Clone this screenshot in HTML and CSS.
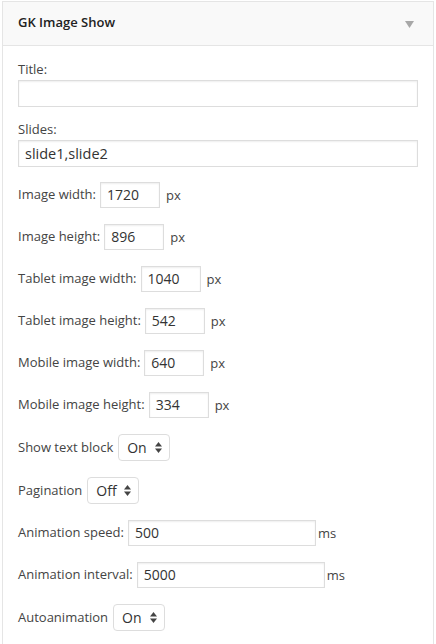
FILE: index.html
```html
<!DOCTYPE html>
<html>
<head>
<meta charset="utf-8">
<link rel="stylesheet" href="styles.css">
</head>
<body>
<div class="widget">
  <div class="widget-top">
    <h4 class="widget-title">GK Image Show</h4>
    <svg class="toggle" width="9" height="7" viewBox="0 0 9 7"><polygon points="0,0 9,0 4.5,7" fill="#a8a8a8"/></svg>
  </div>
  <div class="widget-inside">
    <div class="field block first">
      <label class="lbl">Title:</label>
      <div class="input wide"></div>
    </div>
    <div class="field block second">
      <label class="lbl">Slides:</label>
      <div class="input wide big">slide1,slide2</div>
    </div>
    <div class="row first-row"><span class="lbl">Image width:</span><span class="input small">1720</span><span class="unit">px</span></div>
    <div class="row"><span class="lbl">Image height:</span><span class="input small">896</span><span class="unit">px</span></div>
    <div class="row"><span class="lbl">Tablet image width:</span><span class="input small">1040</span><span class="unit">px</span></div>
    <div class="row"><span class="lbl">Tablet image height:</span><span class="input small">542</span><span class="unit">px</span></div>
    <div class="row"><span class="lbl">Mobile image width:</span><span class="input small">640</span><span class="unit">px</span></div>
    <div class="row"><span class="lbl">Mobile image height:</span><span class="input small">334</span><span class="unit">px</span></div>
    <div class="row sel-row"><span class="lbl">Show text block</span><span class="select"><span class="val">On</span><svg width="7" height="11" viewBox="0 0 7 11"><polygon points="3.5,0 7,4.5 0,4.5" fill="#444"/><polygon points="0,6.5 7,6.5 3.5,11" fill="#444"/></svg></span></div>
    <div class="row sel-row"><span class="lbl">Pagination</span><span class="select"><span class="val">Off</span><svg width="7" height="11" viewBox="0 0 7 11"><polygon points="3.5,0 7,4.5 0,4.5" fill="#444"/><polygon points="0,6.5 7,6.5 3.5,11" fill="#444"/></svg></span></div>
    <div class="row"><span class="lbl">Animation speed:</span><span class="input long">500</span><span class="unit tight">ms</span></div>
    <div class="row"><span class="lbl">Animation interval:</span><span class="input long">5000</span><span class="unit tight">ms</span></div>
    <div class="row sel-row"><span class="lbl">Autoanimation</span><span class="select"><span class="val">On</span><svg width="7" height="11" viewBox="0 0 7 11"><polygon points="3.5,0 7,4.5 0,4.5" fill="#444"/><polygon points="0,6.5 7,6.5 3.5,11" fill="#444"/></svg></span></div>
  </div>
</div>
</body>
</html>
```

FILE: styles.css
```css
html, body {
  margin: 0;
  padding: 0;
  background: #ffffff;
}
body {
  padding: 1px 2px 0 2px;
  font-family: "Open Sans", "Liberation Sans", sans-serif;
  font-size: 13px;
  color: #444;
}
.widget {
  width: 432px;
  box-sizing: border-box;
  border: 1px solid #e5e5e5;
  border-bottom: none;
  height: 660px;
  background: #fff;
}
.widget-top {
  height: 43px;
  background: #f9f9f9;
  border-bottom: 1px solid #e5e5e5;
  display: flex;
  align-items: center;
  justify-content: space-between;
  padding: 0 19px 0 15px;
}
.widget-title {
  margin: 0;
  font-size: 13px;
  font-weight: 600;
  color: #222;
  line-height: 1;
  position: relative;
  top: -1px;
}
.toggle {
  position: relative;
  top: 1px;
}
.widget-inside {
  padding: 0 15px;
  display: flex;
  flex-direction: column;
}
.field.block {
  display: flex;
  flex-direction: column;
}
.field.first {
  margin-top: 14px;
}
.field.second {
  margin-top: 13px;
}
.lbl {
  line-height: 19px;
  color: #444;
  white-space: nowrap;
}
.field .lbl {
  margin-bottom: 1px;
}
.input {
  box-sizing: border-box;
  border: 1px solid #ddd;
  box-shadow: inset 0 1px 2px rgba(0,0,0,0.07);
  background: #fff;
  height: 27px;
  line-height: 25px;
  padding: 0 6px;
  font-size: 14px;
  color: #333;
}
.input.wide {
  width: 100%;
}
.input.big {
  font-size: 14.5px;
}
.row {
  display: flex;
  align-items: center;
  height: 27px;
  margin-top: 15px;
}
.row.sel-row {
  height: 28px;
}
.row.first-row {
  margin-top: 14px;
}
.row .input.small {
  width: 60px;
  margin-left: 4px;
  height: 26px;
  line-height: 24px;
}
.row .input.long {
  width: 188px;
  margin-left: 4px;
  height: 26px;
  line-height: 24px;
}
.unit {
  margin-left: 6px;
}
.unit.tight {
  margin-left: 2px;
}
.select {
  margin-left: 5px;
  box-sizing: border-box;
  width: 52px;
  height: 27px;
  border: 1px solid #ddd;
  border-radius: 4px;
  display: flex;
  align-items: center;
  justify-content: space-between;
  padding: 0 7px 0 8px;
  font-size: 14px;
  color: #333;
  background: #fff;
}
```
